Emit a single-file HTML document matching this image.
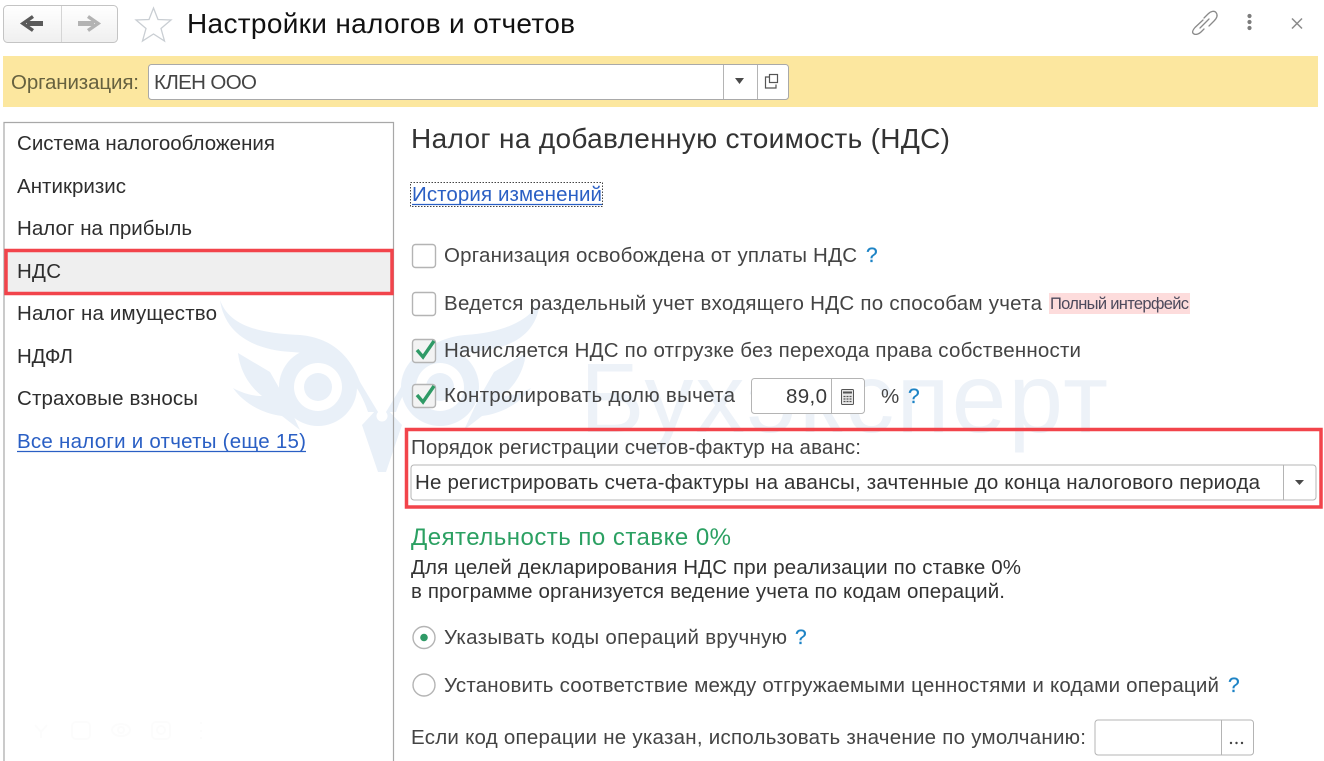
<!DOCTYPE html>
<html lang="ru"><head><meta charset="utf-8"><title>Настройки налогов и отчетов</title>
<style>
html,body{margin:0;padding:0;background:#fff;width:1324px;height:761px;overflow:hidden}
svg{display:block;position:absolute;left:0;top:0;filter:blur(.3px)}
text{font-family:"Liberation Sans",sans-serif;font-size:20.5px;fill:#444}
.d{fill:#2e2e2e}
.q{fill:#1d83c5;stroke:#1d83c5;stroke-width:.25px;font-size:21px}
.l{fill:#2a5fc4}
</style></head><body>
<svg width="1324" height="761" viewBox="0 0 1324 761" xmlns="http://www.w3.org/2000/svg">
<defs><linearGradient id="b" x1="0" y1="0" x2="0" y2="1"><stop offset="0" stop-color="#fff"/><stop offset="1" stop-color="#efefef"/></linearGradient></defs>

<!-- watermark -->
<g fill="#e9f0f8">
<circle cx="318" cy="387" r="39"/><circle cx="440" cy="387" r="39"/>
<path d="M220 300C228 322 250 333 300 335C335 338 352 360 360 382L378 412H386L404 382C412 360 430 338 465 335C500 333 530 322 540 300C538 335 510 350 470 352C440 354 410 370 396 412H368C354 370 325 354 292 352C255 350 225 335 220 300Z"/>
<path d="M238 353C240 370 248 385 262 396C252 396 242 393 233 388C245 405 265 414 282 416L300 430L286 400L270 372Z"/>
<path d="M526 353C524 370 516 385 502 396C512 396 522 393 531 388C519 405 499 414 482 416L464 430L478 400L494 372Z"/>
<path d="M362 425L378 472H386V420L376 410Z"/>
<path d="M402 425L386 472H378V420L388 410Z"/>
</g>
<circle cx="318" cy="387" r="24" fill="#fff"/><circle cx="440" cy="387" r="24" fill="#fff"/>
<circle cx="318" cy="387" r="14" fill="#e9f0f8"/><circle cx="440" cy="387" r="14" fill="#e9f0f8"/>
<circle cx="382" cy="416" r="5.500" fill="#fff"/>
<text x="580" y="432" textLength="528" style="font-size:98px;fill:#edf2f8">Бухэксперт</text>

<!-- faint footer icons -->
<g fill="none" stroke="#fcfcfc" stroke-width="2">
<path d="M35 725L41 732L47 725M41 732V738"/>
<rect x="72" y="722" width="18" height="17" rx="4"/>
<ellipse cx="121" cy="730" rx="9" ry="6"/><circle cx="121" cy="730" r="3"/>
<rect x="152" y="722" width="18" height="17" rx="4"/><circle cx="161" cy="730" r="4"/>
<path d="M201 722V724M201 730V732M201 737V739"/>
</g>

<!-- header -->
<rect x="3.500" y="5.500" width="114" height="37" rx="4" fill="url(#b)" stroke="#c4c4c4"/>
<path d="M61.500 6V42" stroke="#d5d5d5"/>
<path d="M43 23.500H27" stroke="#5a5a5a" stroke-width="5"/><path d="M33 16.500L23 23.500L33 30.500" fill="none" stroke="#5a5a5a" stroke-width="3.500"/>
<path d="M78 23.500H94" stroke="#b3b3b3" stroke-width="5"/><path d="M88 16.500L98 23.500L88 30.500" fill="none" stroke="#b3b3b3" stroke-width="3.500"/>
<path d="M153.500 8L158 19.500L171 20L161 28.500L164.500 41L153.500 34L142.500 41L146 28.500L136 20L149 19.500Z" fill="#fff" stroke="#c9ced3" stroke-width="1.300"/>
<text x="187" y="33" textLength="388" style="font-size:28px;fill:#111">Настройки налогов и отчетов</text>
<g fill="none" stroke="#8a8a8a" stroke-width="1.300" stroke-linecap="round">
<path d="M1204 18L1208 14C1211 11 1214.500 10.500 1216 12.500C1218 15 1217 18 1214 21L1209 26"/>
<path d="M1203 20L1195 27.500C1192 31 1192 33 1194 34C1196 35 1199 34 1201 32L1204 29"/>
<path d="M1200 28L1209 19"/>
</g>
<path d="M1292 18.500L1302 28.500M1302 18.500L1292 28.500" stroke="#8a8a8a" stroke-width="1.500" fill="none"/>
<circle cx="1249.500" cy="16" r="2.100" fill="#7c7c7c"/><circle cx="1249.500" cy="22" r="2.100" fill="#7c7c7c"/><circle cx="1249.500" cy="28" r="2.100" fill="#7c7c7c"/>

<!-- org bar -->
<rect x="3" y="56" width="1315" height="51" fill="#fce79f"/>
<text x="11" y="89" textLength="128" style="fill:#66613f">Организация:</text>
<rect x="148.500" y="64.500" width="640" height="35" rx="3" fill="#fff" stroke="#a9a9a9"/>
<path d="M723.500 65V99M757.500 65V99" stroke="#b4b4b4"/>
<text x="154" y="89" textLength="103">КЛЕН ООО</text>
<path d="M735 78H744L739.500 84Z" fill="#4a4a4a"/>
<path d="M769 77H765.500V88H776V84.500" fill="none" stroke="#555" stroke-width="1.200"/><rect x="769.500" y="74.500" width="8" height="8" fill="#fff" stroke="#555" stroke-width="1.200"/>

<!-- left nav -->
<path d="M4 761V122.500H393.500V761" fill="none" stroke="#a8a8a8" stroke-width="1.200"/>
<rect x="6" y="251" width="386" height="42" fill="#efefef"/>
<rect x="6" y="250.500" width="386" height="43" fill="none" stroke="#f2444b" stroke-width="3.500"/>
<text class="d" x="17" y="150" textLength="258">Система налогообложения</text>
<text class="d" x="17" y="193" textLength="109">Антикризис</text>
<text class="d" x="17" y="235" textLength="175">Налог на прибыль</text>
<text class="d" x="17" y="278" textLength="44">НДС</text>
<text class="d" x="17" y="320" textLength="200">Налог на имущество</text>
<text class="d" x="17" y="363" textLength="56">НДФЛ</text>
<text class="d" x="17" y="405" textLength="181">Страховые взносы</text>
<text class="l" x="17" y="448" textLength="289">Все налоги и отчеты (еще 15)</text>
<path d="M17 451.500H306" stroke="#2a5fc4" stroke-width="1.300"/>

<!-- right -->
<text x="411" y="148" textLength="539" style="font-size:28px;fill:#333">Налог на добавленную стоимость (НДС)</text>

<rect x="410.500" y="182.500" width="192" height="24" fill="none" stroke="#444" stroke-dasharray="1.500 1.500"/>
<text class="l" x="412" y="201" textLength="190">История изменений</text>
<path d="M412 204.500H602" stroke="#2a5fc4" stroke-width="1.300"/>

<rect x="412.500" y="244.500" width="23" height="23" rx="3" fill="#fff" stroke="#b4b4b4" stroke-width="1.400"/>
<text x="444" y="262" textLength="413">Организация освобождена от уплаты НДС</text>
<text class="q" x="866" y="262">?</text>

<rect x="412.500" y="292.500" width="23" height="23" rx="3" fill="#fff" stroke="#b4b4b4" stroke-width="1.400"/>
<text x="444" y="310" textLength="598">Ведется раздельный учет входящего НДС по способам учета</text>
<rect x="1049" y="293" width="141" height="21" fill="#fddcdc"/>
<text x="1050" y="309" textLength="139" style="font-size:16.500px;fill:#4d4a5c">Полный интерфейс</text>

<rect x="412.500" y="339.500" width="23" height="23" rx="3" fill="#f3f3f3" stroke="#b4b4b4" stroke-width="1.400"/>
<path d="M417 350L423 357L434 341" fill="none" stroke="#2f9a66" stroke-width="3.400"/>
<text x="444" y="357" textLength="637">Начисляется НДС по отгрузке без перехода права собственности</text>

<rect x="412.500" y="384.500" width="23" height="23" rx="3" fill="#f3f3f3" stroke="#b4b4b4" stroke-width="1.400"/>
<path d="M417 395L423 402L434 386" fill="none" stroke="#2f9a66" stroke-width="3.400"/>
<text x="444" y="402" textLength="291">Контролировать долю вычета</text>
<rect x="751.500" y="378.500" width="113" height="35" rx="3" fill="#fff" stroke="#b4b4b4"/>
<path d="M831.500 379V413" stroke="#b4b4b4"/>
<text x="786" y="403" textLength="41" style="fill:#3a3a3a">89,0</text>
<rect x="841.500" y="389.500" width="12" height="15" rx="1" fill="#e8e8e8" stroke="#555"/>
<path d="M843 392.500H852" stroke="#555" stroke-width="2"/>
<path d="M843.500 396.500H851.500M843.500 399H851.500M843.500 401.500H851.500" stroke="#555" stroke-dasharray="2 1" stroke-width="1.300"/>
<text x="881" y="403" textLength="18">%</text>
<text class="q" x="908" y="403">?</text>

<rect x="406.500" y="429.500" width="914.500" height="77.500" fill="none" stroke="#f2444b" stroke-width="3.500"/>
<text x="411" y="454" textLength="450">Порядок регистрации счетов-фактур на аванс:</text>
<rect x="411" y="465" width="905" height="35" rx="3" fill="#fff" stroke="#b4b4b4"/>
<path d="M1283.500 465V500" stroke="#b4b4b4"/>
<text x="415" y="489" textLength="845" style="fill:#333">Не регистрировать счета-фактуры на авансы, зачтенные до конца налогового периода</text>
<path d="M1295 480H1304L1299.500 485Z" fill="#4a4a4a"/>

<text x="411" y="545" textLength="320" style="font-size:24px;fill:#2ba062">Деятельность по ставке 0%</text>
<text x="411" y="574" textLength="610" style="fill:#333">Для целей декларирования НДС при реализации по ставке 0%</text>
<text x="411" y="598" textLength="594" style="fill:#333">в программе организуется ведение учета по кодам операций.</text>

<circle cx="424" cy="637.500" r="11" fill="#fff" stroke="#b4b4b4" stroke-width="1.400"/>
<circle cx="424" cy="637.500" r="3.800" fill="#2f9a66"/>
<text x="444" y="644" textLength="343">Указывать коды операций вручную</text>
<text class="q" x="795" y="644">?</text>

<circle cx="424" cy="685" r="11" fill="#fff" stroke="#b4b4b4" stroke-width="1.400"/>
<text x="444" y="692" textLength="775">Установить соответствие между отгружаемыми ценностями и кодами операций</text>
<text class="q" x="1228" y="692">?</text>

<text x="411" y="744" textLength="675">Если код операции не указан, использовать значение по умолчанию:</text>
<rect x="1095" y="720" width="158.500" height="35" rx="3" fill="#fff" stroke="#b4b4b4"/>
<path d="M1221.500 720V755" stroke="#b4b4b4"/>
<circle cx="1231" cy="743" r="1.200" fill="#444"/><circle cx="1236.500" cy="743" r="1.200" fill="#444"/><circle cx="1242" cy="743" r="1.200" fill="#444"/>
</svg>
</body></html>
